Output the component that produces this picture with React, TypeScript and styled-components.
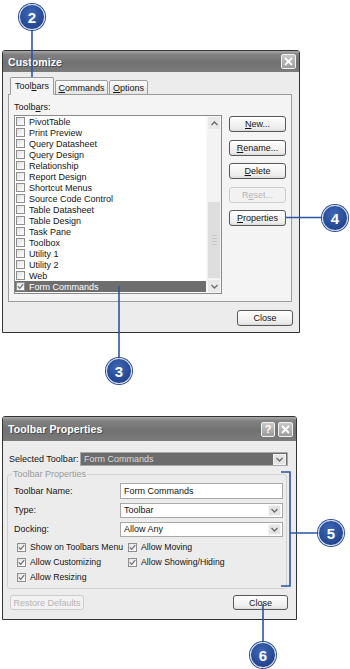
import React from "react";
import styled, { createGlobalStyle } from "styled-components";

const GlobalStyle = createGlobalStyle`
  html, body {
    margin: 0;
    padding: 0;
    background: #ffffff;
  }
  body {
    font-family: "Liberation Sans", Arial, sans-serif;
    color: #141414;
  }
`;

const Canvas = styled.div`
  position: relative;
  width: 350px;
  height: 669px;
  overflow: hidden;
  box-sizing: border-box;
  padding: 50px 0 0 2px;
  display: flex;
  flex-direction: column;
  background: #ffffff;
`;

const Dialog = styled.section<{ $w: number; $h: number; $mt?: number }>`
  width: ${(p) => p.$w}px;
  height: ${(p) => p.$h}px;
  margin-top: ${(p) => p.$mt ?? 0}px;
  box-sizing: border-box;
  border: 1px solid #333333;
  border-radius: 3px 3px 0 0;
  background: #ececec;
  display: flex;
  flex-direction: column;
  overflow: hidden;
`;

const TitleBar = styled.div<{ $h: number }>`
  flex: none;
  height: ${(p) => p.$h}px;
  display: flex;
  align-items: center;
  justify-content: space-between;
  padding: 0 3px 0 5px;
  background: linear-gradient(#a8a8a8 0%, #828282 16%, #717171 55%, #7b7b7b 100%);
`;

const TitleText = styled.span`
  color: #ffffff;
  font-weight: bold;
  font-size: 10.5px;
  letter-spacing: 0.1px;
  text-shadow: 1px 1px 0 #4c4c4c;
`;

const CaptionButtons = styled.div`
  display: flex;
  gap: 3px;
`;

const CaptionButton = styled.div<{ $w?: number }>`
  width: ${(p) => p.$w ?? 15}px;
  height: 15px;
  box-sizing: border-box;
  border: 1px solid #f2f2f2;
  border-radius: 2px;
  background: linear-gradient(#c9c9c9, #9b9b9b);
  display: flex;
  align-items: center;
  justify-content: center;
  color: #ffffff;
  font-weight: bold;
  font-size: 11px;
`;

const Body = styled.div<{ $pad: string }>`
  flex: 1;
  display: flex;
  flex-direction: column;
  padding: ${(p) => p.$pad};
`;

const TabRow = styled.div`
  position: relative;
  z-index: 1;
  display: flex;
  align-items: flex-end;
  height: 18px;
  margin: 0 0 -1px 2px;
`;

const Tab = styled.div<{ $active?: boolean; $w: number }>`
  width: ${(p) => p.$w}px;
  height: ${(p) => (p.$active ? 18 : 15)}px;
  box-sizing: border-box;
  margin-right: 1px;
  border: 1px solid #9c9c9c;
  border-bottom-color: ${(p) => (p.$active ? "#f4f4f4" : "#9c9c9c")};
  border-radius: 2px 2px 0 0;
  background: ${(p) => (p.$active ? "#f4f4f4" : "linear-gradient(#fdfdfd, #e4e4e4)")};
  display: flex;
  align-items: center;
  justify-content: center;
  font-size: 9px;
`;

const TabPanel = styled.div`
  width: 284px;
  height: 208px;
  box-sizing: border-box;
  border: 1px solid #9c9c9c;
  background: #f4f4f4;
  padding: 7px 5px 0 5px;
`;

const FieldCaption = styled.div`
  height: 12px;
  font-size: 9px;
  line-height: 11px;
  margin-bottom: 1px;
`;

const ListArea = styled.div`
  display: flex;
  gap: 7px;
`;

const ListBox = styled.div`
  width: 208px;
  height: 179px;
  box-sizing: border-box;
  border: 1px solid #8a8a8a;
  background: #ffffff;
  display: flex;
`;

const ListRows = styled.div`
  flex: 1;
  display: flex;
  flex-direction: column;
`;

const ListRow = styled.div<{ $selected?: boolean }>`
  height: 11px;
  display: flex;
  align-items: center;
  gap: 4px;
  padding-left: 1px;
  font-size: 9px;
  background: ${(p) => (p.$selected ? "#6e6e6e" : "transparent")};
  color: ${(p) => (p.$selected ? "#ffffff" : "#141414")};
`;

const Box = styled.span<{ $size: number }>`
  flex: none;
  width: ${(p) => p.$size}px;
  height: ${(p) => p.$size}px;
  box-sizing: border-box;
  border: 1px solid #8e8e8e;
  background: linear-gradient(135deg, #e2e2e2, #ffffff);
  display: flex;
  align-items: center;
  justify-content: center;
`;

const ScrollBar = styled.div`
  width: 14px;
  display: flex;
  flex-direction: column;
  background: #f3f3f3;
  border-left: 1px solid #f9f9f9;
`;

const ScrollArrow = styled.div`
  height: 14px;
  display: flex;
  align-items: center;
  justify-content: center;
  background: #e9e9e9;
  border: 1px solid #f7f7f7;
  box-sizing: border-box;
`;

const ScrollTrack = styled.div`
  flex: 1;
  display: flex;
  flex-direction: column;
`;

const ScrollThumb = styled.div`
  margin-top: 71px;
  height: 78px;
  box-sizing: border-box;
  border: 1px solid #f2f2f2;
  background: #dedede;
  display: flex;
  flex-direction: column;
  align-items: center;
  justify-content: center;
  gap: 2px;
`;

const Grip = styled.span`
  width: 5px;
  height: 1px;
  background: #c8c8c8;
`;

const ButtonColumn = styled.div`
  display: flex;
  flex-direction: column;
  gap: 7.5px;
  padding-top: 1px;
`;

const Button = styled.div<{ $w: number; $h?: number; $disabled?: boolean; $ml?: number }>`
  width: ${(p) => p.$w}px;
  height: ${(p) => p.$h ?? 16}px;
  margin-left: ${(p) => p.$ml ?? 0}px;
  box-sizing: border-box;
  border: 1px solid ${(p) => (p.$disabled ? "#cdcdcd" : "#585858")};
  border-radius: 3px;
  background: ${(p) => (p.$disabled ? "#f2f2f2" : "linear-gradient(#ffffff, #ebebeb 85%, #d8d8d8)")};
  color: ${(p) => (p.$disabled ? "#b4b4b4" : "#141414")};
  display: flex;
  align-items: center;
  justify-content: center;
  font-size: 9px;
`;

const Key = styled.span`
  text-decoration: underline;
  text-underline-offset: 1px;
`;

const Footer = styled.div<{ $mt: number; $between?: boolean }>`
  display: flex;
  justify-content: ${(p) => (p.$between ? "space-between" : "flex-end")};
  margin-top: ${(p) => p.$mt}px;
`;

const SelectRow = styled.div`
  display: flex;
  align-items: center;
  height: 14px;
  padding-left: 2px;
`;

const RowLabel = styled.span<{ $w: number }>`
  width: ${(p) => p.$w}px;
  flex: none;
  font-size: 9px;
`;

const Combo = styled.div<{ $w: number; $h: number; $dark?: boolean }>`
  width: ${(p) => p.$w}px;
  height: ${(p) => p.$h}px;
  box-sizing: border-box;
  border: 1px solid #a8a8a8;
  background: ${(p) => (p.$dark ? "#6c6c6c" : "#ffffff")};
  color: ${(p) => (p.$dark ? "#dcdcdc" : "#141414")};
  display: flex;
  align-items: center;
  justify-content: space-between;
  padding: 0 1px 0 3px;
  font-size: 9px;
`;

const DropButton = styled.span`
  width: 13px;
  height: 11px;
  flex: none;
  display: flex;
  align-items: center;
  justify-content: center;
  background: #e4e4e4;
  border: 1px solid #f4f4f4;
  box-sizing: border-box;
`;

const Group = styled.fieldset`
  margin: 3px 0 0 0;
  width: 280px;
  height: 120px;
  box-sizing: border-box;
  border: 1px solid #d2d2d2;
  border-radius: 3px;
  padding: 0 3px 3px 4px;
  display: flex;
  flex-direction: column;
`;

const GroupLegend = styled.legend`
  padding: 0 1px;
  font-size: 9px;
  color: #9a9a9a;
`;

const Fields = styled.div`
  display: flex;
  flex-direction: column;
  gap: 3px;
  margin: 4px 0 0 2px;
`;

const FieldRow = styled.div`
  display: flex;
  align-items: center;
  height: 16px;
`;

const Checks = styled.div`
  display: grid;
  grid-template-columns: 111px auto;
  grid-auto-rows: 14px;
  row-gap: 1px;
  margin: 3px 0 0 5px;
`;

const CheckItem = styled.div`
  display: flex;
  align-items: center;
  gap: 4px;
  font-size: 8.7px;
`;

const Badge = styled.div<{ $x: number; $y: number }>`
  position: absolute;
  left: ${(p) => p.$x - 13}px;
  top: ${(p) => p.$y - 13}px;
  width: 26px;
  height: 26px;
  box-sizing: border-box;
  border-radius: 50%;
  border: 1px solid #c9d4ea;
  box-shadow: 0 0 0 1px #2c4c92;
  background: radial-gradient(circle at 45% 35%, #3d68b8, #24468f 70%);
  color: #ffffff;
  font-weight: bold;
  font-size: 15px;
  display: flex;
  align-items: center;
  justify-content: center;
`;

const Leaders = styled.svg`
  position: absolute;
  left: 0;
  top: 0;
  pointer-events: none;
`;

const Chevron = ({ up }: { up?: boolean }) => (
  <svg width="7" height="5" viewBox="0 0 7 5">
    <path
      d={up ? "M0.5 4 L3.5 1 L6.5 4" : "M0.5 1 L3.5 4 L6.5 1"}
      fill="none"
      stroke="#6a6a6a"
      strokeWidth="1.3"
    />
  </svg>
);

const Tick = () => (
  <svg width="7" height="7" viewBox="0 0 7 7">
    <path d="M0.8 3.4 L2.7 5.3 L6.2 1.2" fill="none" stroke="#6d6d6d" strokeWidth="1.2" />
  </svg>
);

const CloseGlyph = () => (
  <svg width="9" height="9" viewBox="0 0 9 9">
    <path d="M1 1 L8 8 M8 1 L1 8" stroke="#ffffff" strokeWidth="1.8" />
  </svg>
);

const toolbars = [
  "PivotTable",
  "Print Preview",
  "Query Datasheet",
  "Query Design",
  "Relationship",
  "Report Design",
  "Shortcut Menus",
  "Source Code Control",
  "Table Datasheet",
  "Table Design",
  "Task Pane",
  "Toolbox",
  "Utility 1",
  "Utility 2",
  "Web",
];

const options = [
  "Show on Toolbars Menu",
  "Allow Moving",
  "Allow Customizing",
  "Allow Showing/Hiding",
  "Allow Resizing",
];

const callouts = [
  { n: 2, x: 32, y: 17 },
  { n: 4, x: 335, y: 218 },
  { n: 3, x: 119, y: 371 },
  { n: 5, x: 331, y: 533 },
  { n: 6, x: 263, y: 655 },
];

export default function App() {
  return (
    <>
      <GlobalStyle />
      <Canvas>
        <Dialog $w={298} $h={283}>
          <TitleBar $h={21}>
            <TitleText>Customize</TitleText>
            <CaptionButton>
              <CloseGlyph />
            </CaptionButton>
          </TitleBar>
          <Body $pad="5px 6px 0 5px">
            <TabRow>
              <Tab $active $w={44}>
                Tool<Key>b</Key>ars
              </Tab>
              <Tab $w={53}>
                <Key>C</Key>ommands
              </Tab>
              <Tab $w={39}>
                <Key>O</Key>ptions
              </Tab>
            </TabRow>
            <TabPanel>
              <FieldCaption>
                Toolb<Key>a</Key>rs:
              </FieldCaption>
              <ListArea>
                <ListBox>
                  <ListRows>
                    {toolbars.map((t) => (
                      <ListRow key={t}>
                        <Box $size={9} />
                        {t}
                      </ListRow>
                    ))}
                    <ListRow $selected>
                      <Box $size={9}>
                        <Tick />
                      </Box>
                      Form Commands
                    </ListRow>
                  </ListRows>
                  <ScrollBar>
                    <ScrollArrow>
                      <Chevron up />
                    </ScrollArrow>
                    <ScrollTrack>
                      <ScrollThumb>
                        <Grip />
                        <Grip />
                        <Grip />
                        <Grip />
                      </ScrollThumb>
                    </ScrollTrack>
                    <ScrollArrow>
                      <Chevron />
                    </ScrollArrow>
                  </ScrollBar>
                </ListBox>
                <ButtonColumn>
                  <Button $w={57}>
                    <Key>N</Key>ew...
                  </Button>
                  <Button $w={57}>
                    <Key>R</Key>ename...
                  </Button>
                  <Button $w={57}>
                    <Key>D</Key>elete
                  </Button>
                  <Button $w={57} $disabled>
                    R<Key>e</Key>set...
                  </Button>
                  <Button $w={57}>
                    <Key>P</Key>roperties
                  </Button>
                </ButtonColumn>
              </ListArea>
            </TabPanel>
            <Footer $mt={8}>
              <Button $w={56}>Close</Button>
            </Footer>
          </Body>
        </Dialog>

        <Dialog $w={295} $h={204} $mt={83}>
          <TitleBar $h={24}>
            <TitleText>Toolbar Properties</TitleText>
            <CaptionButtons>
              <CaptionButton $w={14}>?</CaptionButton>
              <CaptionButton>
                <CloseGlyph />
              </CaptionButton>
            </CaptionButtons>
          </TitleBar>
          <Body $pad="11px 8px 0 4px">
            <SelectRow>
              <RowLabel $w={71}>Selected Toolbar:</RowLabel>
              <Combo $w={208} $h={14} $dark>
                Form Commands
                <DropButton>
                  <Chevron />
                </DropButton>
              </Combo>
            </SelectRow>
            <Group>
              <GroupLegend>Toolbar Properties</GroupLegend>
              <Fields>
                <FieldRow>
                  <RowLabel $w={106}>Toolbar Name:</RowLabel>
                  <Combo $w={163} $h={16}>
                    Form Commands
                  </Combo>
                </FieldRow>
                <FieldRow>
                  <RowLabel $w={106}>Type:</RowLabel>
                  <Combo $w={163} $h={15}>
                    Toolbar
                    <DropButton>
                      <Chevron />
                    </DropButton>
                  </Combo>
                </FieldRow>
                <FieldRow>
                  <RowLabel $w={106}>Docking:</RowLabel>
                  <Combo $w={163} $h={15}>
                    Allow Any
                    <DropButton>
                      <Chevron />
                    </DropButton>
                  </Combo>
                </FieldRow>
              </Fields>
              <Checks>
                {options.map((o) => (
                  <CheckItem key={o}>
                    <Box $size={9}>
                      <Tick />
                    </Box>
                    {o}
                  </CheckItem>
                ))}
              </Checks>
            </Group>
            <Footer $mt={6} $between>
              <Button $w={74} $h={15} $ml={3} $disabled>
                Restore Defaults
              </Button>
              <Button $w={55} $h={15}>
                Close
              </Button>
            </Footer>
          </Body>
        </Dialog>

        <Leaders width="350" height="669" viewBox="0 0 350 669">
          <g fill="none" stroke="#2b55a6" strokeWidth="1.6">
            <path d="M32 30 V89" />
            <path d="M286 217.5 H322" />
            <path d="M119 286 V358" />
            <path d="M281 472 H290 V586 H281 M290 533 H318" />
            <path d="M263 604 V642" />
          </g>
        </Leaders>
        {callouts.map((c) => (
          <Badge key={c.n} $x={c.x} $y={c.y}>
            {c.n}
          </Badge>
        ))}
      </Canvas>
    </>
  );
}
